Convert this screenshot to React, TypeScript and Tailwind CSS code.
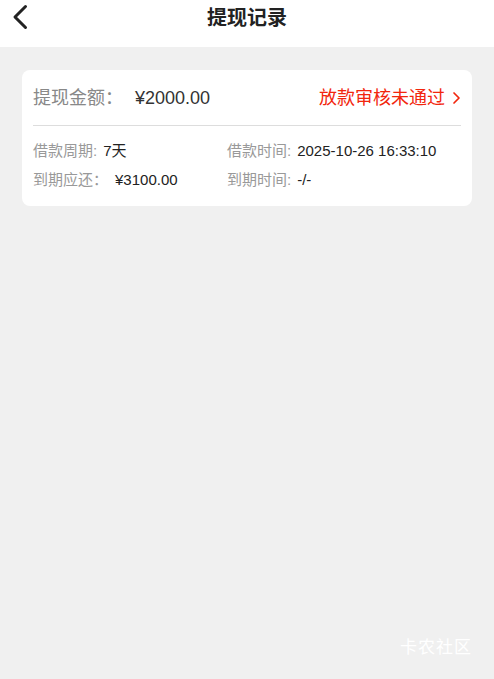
const FONT = { fontFamily: '"Liberation Sans", "Noto Sans CJK SC", sans-serif' };

export default function App() {
  return (
    <div className="relative w-[494px] h-[679px] bg-[#f0f0f0] overflow-hidden" style={FONT}>
      <div className="h-[47px] bg-white flex items-center relative">
        <svg className="absolute left-[10px] top-[3px]" width="20" height="28" viewBox="0 0 20 28" fill="none">
          <path d="M15.5 3.5 L5 14 L15.5 24.5" stroke="#222" strokeWidth="3" strokeLinecap="round" strokeLinejoin="round" />
        </svg>
        <h1 className="flex-1 text-center text-[20px] font-bold text-[#222] -mt-[12px]">提现记录</h1>
      </div>

      <div className="mx-[22px] mt-[23px] bg-white rounded-[8px] px-[11px] pt-[14px] pb-[16px]">
        <div className="flex items-center justify-between h-[28px]">
          <div className="flex items-center text-[18px]">
            <span className="text-[#888]">提现金额：</span>
            <span className="text-[#333] ml-[12px]">¥2000.00</span>
          </div>
          <div className="flex items-center text-[18px] text-[#f2260d]">
            <span>放款审核未通过</span>
            <svg className="ml-[7px]" width="9" height="14" viewBox="0 0 9 14" fill="none">
              <path d="M2 2 L7 7 L2 12" stroke="#f2260d" strokeWidth="1.7" strokeLinecap="round" strokeLinejoin="round" />
            </svg>
          </div>
        </div>
        <div className="h-px bg-[#ddd] mt-[13px]" />
        <div className="grid grid-cols-[194px_1fr] gap-y-[9px] mt-[15px] text-[15px] leading-[20px]">
          <div>
            <span className="text-[#999]">借款周期:</span>
            <span className="text-[#222] ml-[6px]">7天</span>
          </div>
          <div>
            <span className="text-[#999]">借款时间:</span>
            <span className="text-[#222] ml-[6px]">2025-10-26 16:33:10</span>
          </div>
          <div>
            <span className="text-[#999]">到期应还：</span>
            <span className="text-[#222] ml-[7px]">¥3100.00</span>
          </div>
          <div>
            <span className="text-[#999]">到期时间:</span>
            <span className="text-[#222] ml-[6px]">-/-</span>
          </div>
        </div>
      </div>

      <div className="absolute right-[22px] bottom-[19px] text-[17px] text-white tracking-[1px]">卡农社区</div>
    </div>
  );
}
